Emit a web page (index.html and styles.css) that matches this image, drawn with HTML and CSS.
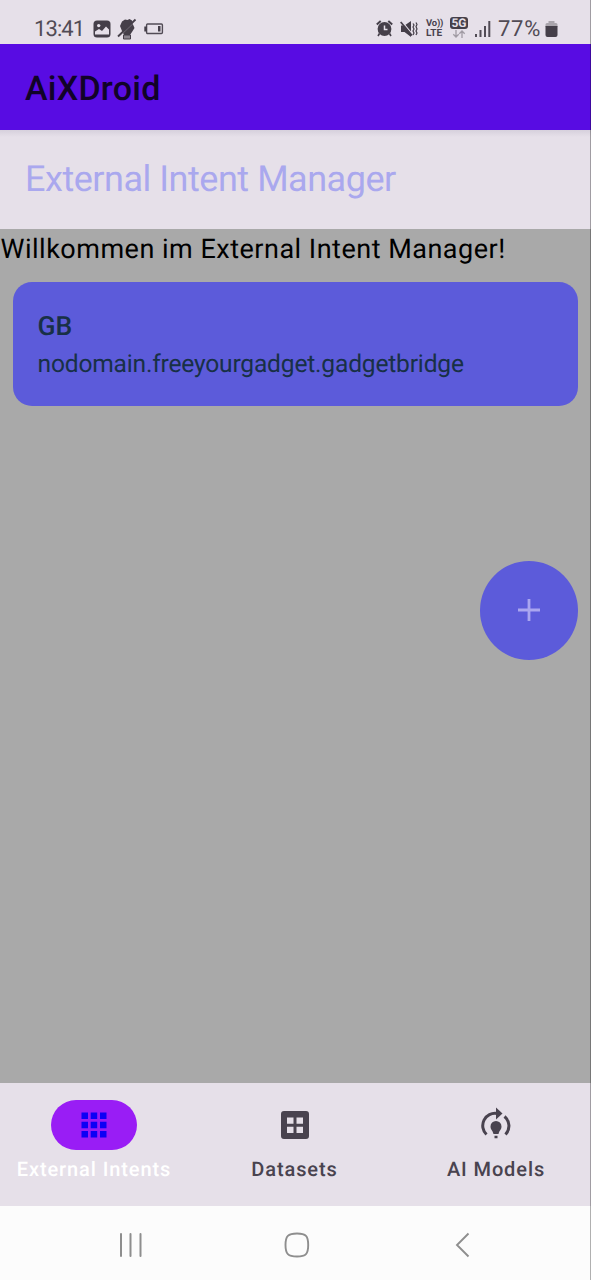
FILE: index.html
```html
<!DOCTYPE html>
<html lang="de">
<head>
<meta charset="utf-8">
<title>AiXDroid</title>
<link rel="stylesheet" href="styles.css">
</head>
<body>
<div class="screen">
  <header class="status">
    <div class="status-left">
      <span class="clock">13:41</span>
      <svg class="picture" width="18" height="18" viewBox="0 0 18 18"><rect x=".5" y=".5" width="17" height="17" rx="3.5" fill="#453f49"/><circle cx="5.7" cy="5.6" r="1.7" fill="#e6e0e9"/><path d="M2 14.5v-3l4-2.5 3 2 4-4.500 3 3v5z" fill="#e6e0e9"/></svg>
      <svg class="hand" width="20" height="22" viewBox="0 0 20 22"><path d="M3 8l2-4.500 3-2 2.500.5 2-1L15 2.500l1 4 1.500 3.500-2.500 4-2 3H7l-2-4z" fill="#453f49"/><path d="M6.500 17h7v4h-7z" fill="#8b858e" stroke="#453f49"/><path d="M2.300 18.700L19 2.500" stroke="#e6e0e9" stroke-opacity=".6" stroke-width=".8"/><path d="M1 18.500L18.500 1.500" stroke="#453f49" stroke-width="1.800"/></svg>
      <svg class="lowbat" width="20" height="12" viewBox="0 0 20 12"><rect x="2.600" y="1" width="15.800" height="9.500" rx="1" fill="none" stroke="#514b55" stroke-width="1.400"/><path d="M.3 3.500h2.500v5H.3zM14 3h2.500v5.500H14z" fill="#453f49"/></svg>
    </div>
    <div class="status-right">
      <svg class="alarm" width="17" height="17" viewBox="0 0 17 17"><circle cx="8.500" cy="9" r="6.900" fill="#453f49"/><path d="M.8 4.500L4.700 1M16.200 4.500L12.300 1" stroke="#453f49" stroke-width="2"/><path d="M3.500 13.500L2 16M13.500 13.500L15 16" stroke="#453f49" stroke-width="1.600"/><path d="M8.500 5.500v4h3" fill="none" stroke="#e6e0e9" stroke-width="1.500"/></svg>
      <svg class="mute" width="18" height="18" viewBox="0 0 18 18"><path d="M1 5.500h3.500L11 1v16L4.500 12H1z" fill="#453f49"/><path d="M1.500 1L13 15" stroke="#e6e0e9" stroke-width="1.200"/><path d="M.7 2L12 15.500" stroke="#453f49" stroke-width="1.700"/><path d="M13 3.500l1 1.500-1 2 1 2-1 2 1 2-1 2M16 2.500l1 2-1 2 1 2.500-1 2 1 2-1 2" fill="none" stroke="#453f49" stroke-width="1.200"/></svg>
      <span class="volte"><span class="volte-top">Vo))</span><span>LTE</span></span>
      <span class="five"><span class="five-badge">5G</span><svg width="14" height="8" viewBox="0 0 14 8"><path d="M4 0v7M1.300 4.300L4 7l2.700-2.700M10 8V1M7.300 3.700L10 1l2.700 2.700" fill="none" stroke="#a19ba4" stroke-width="1.300"/></svg></span>
      <svg class="signal" width="16" height="16" viewBox="0 0 16 16"><path d="M0 13h2v3H0zM4.500 9h2v7h-2zM9 5h2v11H9zM13.300 0h2v16h-2z" fill="#514b55"/></svg>
      <span class="percent">77%</span>
      <svg class="battery" width="13" height="18" viewBox="0 0 13 18"><path d="M3.500 1h6v2h1.500q1.500 0 1.500 1.500V7H.5V4.500Q.5 3 2 3h1.500z" fill="#aaa5ac"/><path d="M.5 6h12v9q0 2-2 2h-8q-2 0-2-2z" fill="#453f49"/></svg>
    </div>
  </header>
  <div class="appbar"><span class="app-title">AiXDroid</span></div>
  <div class="subbar"><span class="page-title">External Intent Manager</span></div>
  <main class="content">
    <p class="welcome">Willkommen im External Intent Manager!</p>
    <article class="card">
      <span class="card-name">GB</span>
      <span class="card-package">nodomain.freeyourgadget.gadgetbridge</span>
    </article>
    <button class="fab" aria-label="Add"><svg width="24" height="24" viewBox="0 0 24 24"><path d="M1 12h22M12 1v22" stroke="#aaa6f0" stroke-width="2.800"/></svg></button>
  </main>
  <nav class="tabs">
    <div class="tab tab-active">
      <span class="pill"><svg width="26" height="26" viewBox="0 0 26 26"><path d="M.5.5h6.500V7H.5zM9.700.5h6.500V7H9.700zM19 .5h6.500V7H19zM.5 9.700h6.500v6.500H.5zM9.700 9.700h6.500v6.500H9.700zM19 9.700h6.500v6.500H19zM.5 19h6.500v6.500H.5zM9.700 19h6.500v6.500H9.700zM19 19h6.500v6.500H19z" fill="#0c00f5"/></svg></span>
      <span class="label">External Intents</span>
    </div>
    <div class="tab">
      <span class="pill"><svg width="28" height="28" viewBox="0 0 28 28"><path fill-rule="evenodd" d="M3 0h22q3 0 3 3v22q0 3-3 3H3q-3 0-3-3V3Q0 0 3 0zM6 6.500v6.300h6.500V6.500zM15.500 6.500v6.300H22V6.500zM6 15.800v6.300h6.500v-6.300zM15.500 15.800v6.300H22v-6.300z" fill="#49434f"/></svg></span>
      <span class="label">Datasets</span>
    </div>
    <div class="tab">
      <span class="pill"><svg class="model" width="30" height="32" viewBox="0 0 30 32"><path d="M5.500 27.500A12.300 12.300 0 0 1 16 6.500M23.500 9.500A12.300 12.300 0 0 1 24.500 27.500" fill="none" stroke="#49434f" stroke-width="3"/><path d="M15 .5L21.500 6.500 15 12.500z" fill="#49434f"/><path d="M15 14a5.500 5.500 0 0 1 5.500 5.500c0 3-2 3.500-3 7.500h-5c-1-4-3-4.500-3-7.500A5.500 5.500 0 0 1 15 14zM13.500 28.700h3v2.600h-3z" fill="#49434f"/></svg></span>
      <span class="label">AI Models</span>
    </div>
  </nav>
  <footer class="system">
    <svg class="recents" width="24" height="24" viewBox="0 0 24 24"><path d="M2 1v22M11.500 1v22M21.500 1v22" stroke="#8e8e8e" stroke-width="2" stroke-linecap="round"/></svg>
    <svg class="home" width="26" height="26" viewBox="0 0 26 26"><path d="M13 1.500C22 1.500 24.200 4 24.200 13S22 24.500 13 24.500 1.500 22 1.500 13 4 1.500 13 1.500z" fill="none" stroke="#8e8e8e" stroke-width="1.900"/></svg>
    <svg class="back" width="16" height="26" viewBox="0 0 16 26"><path d="M13.500 1.500L2 13l11.500 11.500" fill="none" stroke="#8e8e8e" stroke-width="1.900"/></svg>
  </footer>
</div>
</body>
</html>
```
FILE: styles.css
```css
* { box-sizing: border-box; }
body { margin: 0; font-family: Roboto, "Liberation Sans", sans-serif; color: #49434f; text-rendering: geometricPrecision; }
.screen { position: relative; width: 591px; height: 1280px; display: flex; flex-direction: column; overflow: hidden; background: #a9a9a9; }
.screen::after { content: ""; position: absolute; inset: 0 0 0 auto; width: 1px; background: rgba(0, 0, 0, .3); }
.status { height: 44px; padding: 13px 33px 0 34px; display: flex; justify-content: space-between; background: #e6e0e9; }
.status-left, .status-right { display: flex; align-items: center; height: 31px; }
.clock, .percent { padding-top: 2px; font-size: 22px; line-height: 31px; color: #514b55; }
.clock { width: 50px; letter-spacing: -.9px; }
.picture { margin-left: 9px; }
.hand { margin-left: 6px; }
.lowbat { margin-left: 7px; }
.mute { margin-left: 7px; }
.volte { margin-left: 8px; width: 18px; display: flex; flex-direction: column; font-size: 10px; line-height: 10px; font-weight: 700; }
.volte-top { font-size: 9.500px; letter-spacing: -.2px; }
.five { margin-left: 6px; width: 18px; display: flex; flex-direction: column; align-items: center; gap: 1px; margin-top: -2px; }
.five-badge { width: 18px; height: 12px; border-radius: 3px; background: #453f49; color: #e6e0e9; font-size: 12px; line-height: 12px; font-weight: 700; text-align: center; }
.signal { margin-left: 7px; }
.percent { margin-left: 7px; width: 45px; letter-spacing: .7px; }
.battery { margin-left: 2px; }
.appbar { height: 86px; padding-left: 25px; display: flex; align-items: center; background: #580ce3; }
.app-title { font-size: 34px; font-weight: 500; line-height: 44px; letter-spacing: .25px; color: #110328; padding-top: 3px; }
.subbar { height: 99px; padding: 0 0 2px 25px; display: flex; align-items: center; background: linear-gradient(#d6d0dc, #e6e0e9 7px); }
.page-title { font-size: 36px; line-height: 44px; letter-spacing: -.47px; color: #aaa8ee; }
.content { height: 854px; display: flex; flex-direction: column; }
.welcome { margin: 0; padding: 1px 0 0 .5px; font-size: 27px; line-height: 38px; letter-spacing: .5px; color: #000; }
.card { margin: 14px 13px 0 12.500px; height: 124px; padding: 26px 25px 24px; border-radius: 19px; background: #5c5bda; display: flex; flex-direction: column; color: #183046; }
.card-name { font-size: 26.500px; line-height: 38px; font-weight: 500; }
.card-package { font-size: 24.600px; line-height: 38px; letter-spacing: -.2px; }
.fab { width: 98px; height: 98.500px; margin: 155px 13px 0 auto; padding: 0; border: 0; border-radius: 50%; display: grid; place-items: center; background: #5c5bda; }
.tabs { height: 123px; padding-top: 17px; display: grid; grid-template-columns: 188px 213px 190px; background: #e6e0e9; }
.tab { display: flex; flex-direction: column; align-items: center; gap: 6px; }
.pill { width: 86px; height: 50px; border-radius: 25px; display: grid; place-items: center; }
.tab-active .pill { background: #991df5; }
.model { margin-top: -5px; }
.label { font-size: 20px; line-height: 26px; font-weight: 500; letter-spacing: .9px; white-space: nowrap; }
.tab-active .label { color: #fff; }
.system { height: 74px; padding: 4px 0 0 119px; display: flex; align-items: center; background: #fcfcfc; }
.home { margin-left: 140.500px; }
.back { margin-left: 145.500px; }
```
